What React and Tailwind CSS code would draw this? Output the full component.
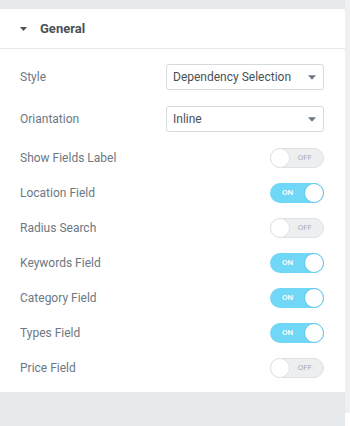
import { useState } from 'react';

const Caret = ({ className = '', w = 9, h = 5 }) => (
  <svg width={w} height={h} viewBox="0 0 9 5" className={className}>
    <path d="M0 0h9L4.5 5z" fill="currentColor" />
  </svg>
);

const SelectRow = ({ label, value }) => (
  <div className="flex items-center justify-between h-[26px]">
    <span className="text-[12px] text-[#6d7882]">{label}</span>
    <div className="w-[158px] h-[26px] border border-[#d5dadf] rounded-[3px] flex items-center justify-between pl-[6px] pr-[7px] bg-white">
      <span className="text-[12px] text-[#495157]">{value}</span>
      <Caret className="text-[#6d7882]" w={8} h={5} />
    </div>
  </div>
);

const Toggle = ({ on, onClick }) => (
  <button
    onClick={onClick}
    className={`relative w-[54px] h-[20px] rounded-full ${on ? 'bg-[#71d7f7]' : 'bg-[#eceef0] border border-[#dfe2e5]'}`}
  >
    {on ? (
      <>
        <span className="absolute left-[12px] top-1/2 -translate-y-1/2 text-[8px] font-medium text-white leading-none">ON</span>
        <span className="absolute right-0 top-0 w-[20px] h-[20px] rounded-full bg-white border border-[#5ec6e8]" />
      </>
    ) : (
      <>
        <span className="absolute right-[11px] top-1/2 -translate-y-1/2 text-[8px] text-[#a4afb7] leading-none">OFF</span>
        <span className="absolute left-[-1px] top-[-1px] w-[20px] h-[20px] rounded-full bg-white border border-[#dfe2e5]" />
      </>
    )}
  </button>
);

export default function App() {
  const [toggles, setToggles] = useState([
    { label: 'Show Fields Label', on: false },
    { label: 'Location Field', on: true },
    { label: 'Radius Search', on: false },
    { label: 'Keywords Field', on: true },
    { label: 'Category Field', on: true },
    { label: 'Types Field', on: true },
    { label: 'Price Field', on: false },
  ]);

  const flip = i => setToggles(t => t.map((x, j) => (j === i ? { ...x, on: !x.on } : x)));

  return (
    <div className="w-[350px] h-[426px] bg-[#e6e9ec] flex font-['Roboto',sans-serif] overflow-hidden">
      <div className="w-[345px] flex flex-col pt-[9px]">
        <div className="bg-white">
          {/* section header */}
          <div className="h-[39px] flex items-center pl-[20px] border-b border-[#e6e9ec] box-content">
            <Caret className="text-[#495157] mr-[13px]" w={7} h={4} />
            <span className="text-[13px] font-bold text-[#495157]">General</span>
          </div>

          <div className="pl-[20px] pr-[21px] pt-[15px] pb-[14px] flex flex-col">
            <div className="flex flex-col gap-[16px]">
              <SelectRow label="Style" value="Dependency Selection" />
              <SelectRow label="Oriantation" value="Inline" />
            </div>
            <div className="flex flex-col gap-[15px] mt-[16px]">
              {toggles.map((t, i) => (
                <div key={t.label} className="flex items-center justify-between h-[20px]">
                  <span className="text-[12px] text-[#6d7882]">{t.label}</span>
                  <Toggle on={t.on} onClick={() => flip(i)} />
                </div>
              ))}
            </div>
          </div>
        </div>
      </div>
      <div className="w-[5px] flex flex-col">
        <div className="flex-1 bg-[#eef0f2]" />
        <div className="h-[13px] bg-white" />
      </div>
    </div>
  );
}
